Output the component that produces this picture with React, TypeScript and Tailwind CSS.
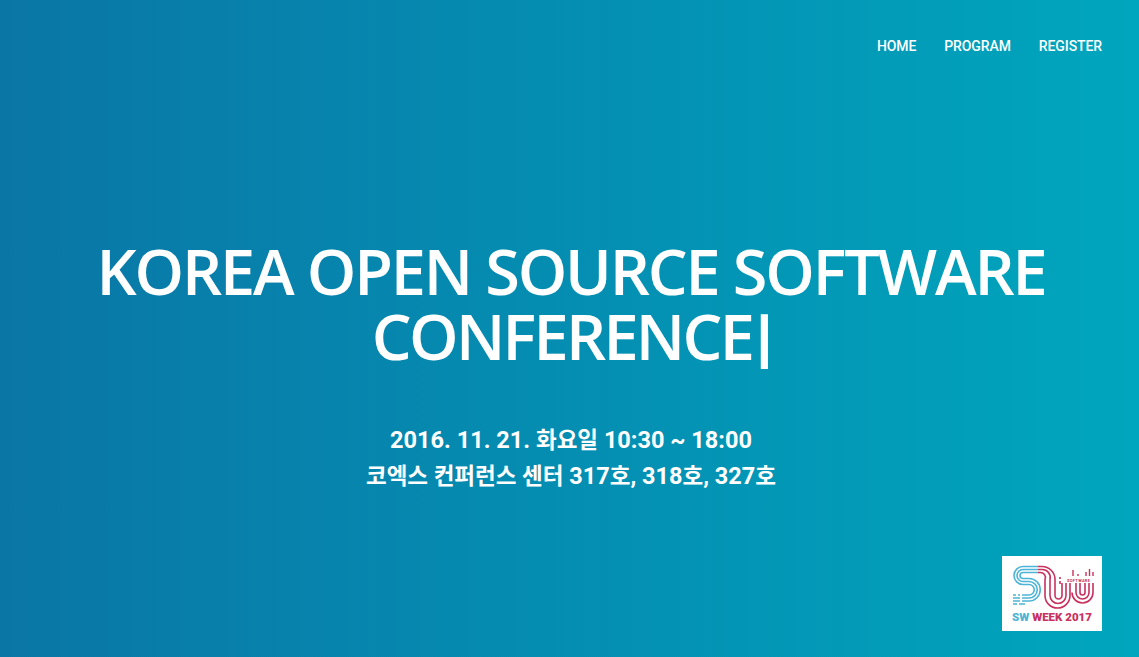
const links = ['HOME', 'PROGRAM', 'REGISTER'];

function SwWeekLogo() {
  const blue = '#4db4d6';
  const red = '#c8325f';
  return (
    <div className="flex h-[75px] w-[100px] flex-col items-center bg-white">
      <svg viewBox="0 0 100 55" className="h-[55px] w-[100px]" fill="none" strokeWidth="1.6">
        {/* S, blue strands that turn red into the first u */}
        <g stroke={blue}>
          <path d="M36 10.5 H21 a9 9 0 0 0 0 18 H27 a5.25 5.25 0 0 1 0 10.5 H20" />
          <path d="M36 13.5 H21 a6 6 0 0 0 0 12 H27 a8.25 8.25 0 0 1 0 16.5 H20" />
          <path d="M36 16.5 H21 a3 3 0 0 0 0 6 H27 a11.25 11.25 0 0 1 0 22.5 H20" />
          <path d="M11 39 h3 M16 39 h2 M11 42 h7 M11 45 h7 M11 48 h4 M17 48 h6" />
        </g>
        {/* first u */}
        <g stroke={red}>
          <path d="M36 10.5 h4 a13 13 0 0 1 13 13 V39.5 a3.5 3.5 0 0 0 7 0 V27" />
          <path d="M36 13.5 h4 a8 8 0 0 1 8 10 V39.5 a8 8 0 0 0 16 0 V27" />
          <path d="M36 16.5 h2 a5 5 0 0 1 5 7 V39.5 a12.5 12.5 0 0 0 25 0 V27" />
        </g>
        {/* second u */}
        <g stroke={red}>
          <path d="M78 27 V36.5 a2.5 2.5 0 0 0 5 0 V27" />
          <path d="M74 27 V36.5 a6.5 6.5 0 0 0 13 0 V27" />
          <path d="M70 36.5 a10.5 10.5 0 0 0 21 0 V27" />
        </g>
        <path d="M58 28 v-3 M58 23 v-2" stroke={red} />
        <path d="M71 14 v6 M76 18 v2 M84 16 v4 M87.5 13 v7 M91 16 v4" stroke={red} strokeWidth="1.4" />
        <text x="65" y="25.5" fontSize="4" fontWeight="700" letterSpacing="0.3" fill={red} stroke="none" fontFamily="Roboto, sans-serif">
          SOFTWARE
        </text>
      </svg>
      <span className="font-['Roboto'] text-[11.5px] leading-[13px] font-black whitespace-nowrap">
        <span className="text-[#4db4d6]">SW </span>
        <span className="text-[#c8325f]">WEEK 2017</span>
      </span>
    </div>
  );
}

export default function App() {
  return (
    <div className="flex h-[657px] w-full flex-col overflow-hidden bg-gradient-to-r from-[#0a76a6] to-[#00a6bd] font-['Roboto',sans-serif] text-white">
      <nav className="flex justify-end gap-7 pt-[38px] pr-[37px] text-sm leading-[16px] font-medium tracking-[-0.1px]">
        {links.map((l) => (
          <a key={l} href="#">
            {l}
          </a>
        ))}
      </nav>

      <main className="flex flex-1 flex-col items-center pt-[184px] pl-[3px] text-center">
        <h1 className="font-['Open_Sans','Noto_Sans_CJK_KR',sans-serif] text-[63px] leading-[65px] font-semibold tracking-[-2.15px]">
          KOREA OPEN SOURCE SOFTWARE
          <br />
          <span className="tracking-[-2.7px]">CONFERENCE</span>
          <span className="ml-[4px] font-['Roboto'] font-black [-webkit-text-stroke:1.5px_white]">|</span>
        </h1>
        <p className="mt-[51px] font-['Roboto','Noto_Sans_CJK_KR',sans-serif] text-[23.5px] leading-[36px] font-bold">
          2016. 11. 21. <span className="text-[22.5px]">화요일</span> 10:30 ~ 18:00
          <br />
          <span className="text-[22.5px]">코엑스 컨퍼런스 센터</span> 317<span className="text-[22.5px]">호</span>, 318
          <span className="text-[22.5px]">호</span>, 327<span className="text-[22.5px]">호</span>
        </p>
      </main>

      <div className="flex justify-end pr-[37px] pb-[26px]">
        <SwWeekLogo />
      </div>
    </div>
  );
}
